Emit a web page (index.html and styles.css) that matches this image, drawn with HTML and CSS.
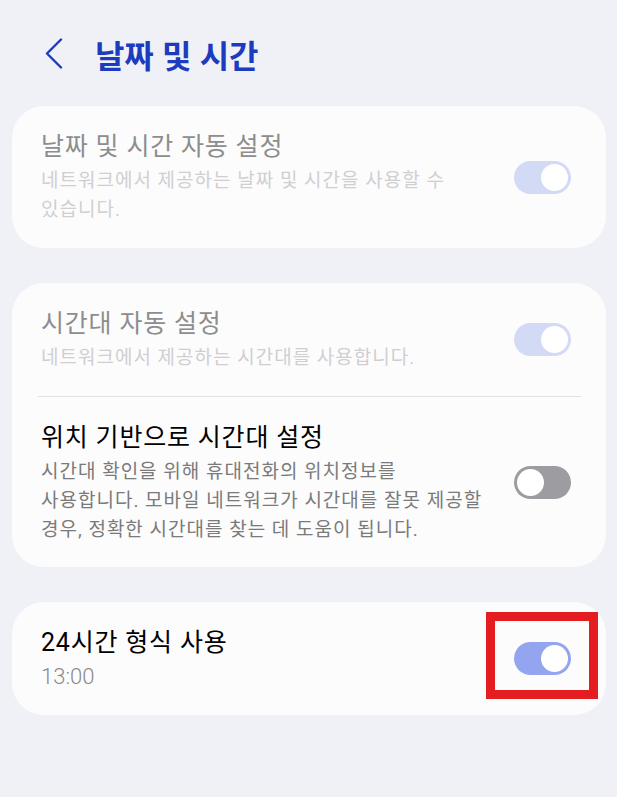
FILE: index.html
```
<!DOCTYPE html>
<html lang="ko">
<head>
<meta charset="utf-8">
<title>날짜 및 시간</title>
<link rel="stylesheet" href="styles.css">
</head>
<body>
<div class="page">
  <header class="header">
    <svg class="back" width="20" height="31" viewBox="0 0 20 31" aria-hidden="true">
      <polyline points="17,1.5 3,15.5 17,29.5" fill="none" stroke="#1d3bbf" stroke-width="2.4" stroke-linejoin="round" stroke-linecap="round"/>
    </svg>
    <h1 class="title">날짜 및 시간</h1>
  </header>

  <section class="card">
    <div class="row">
      <div class="text">
        <div class="label dim">날짜 및 시간 자동 설정</div>
        <div class="desc dim">네트워크에서 제공하는 날짜 및 시간을 사용할 수 있습니다.</div>
      </div>
      <span class="switch on disabled"><span class="thumb"></span></span>
    </div>
  </section>

  <section class="card">
    <div class="row">
      <div class="text">
        <div class="label dim">시간대 자동 설정</div>
        <div class="desc dim">네트워크에서 제공하는 시간대를 사용합니다.</div>
      </div>
      <span class="switch on disabled"><span class="thumb"></span></span>
    </div>
    <div class="divider"></div>
    <div class="row last">
      <div class="text">
        <div class="label">위치 기반으로 시간대 설정</div>
        <div class="desc">시간대 확인을 위해 휴대전화의 위치정보를 사용합니다. 모바일 네트워크가 시간대를 잘못 제공할 경우, 정확한 시간대를 찾는 데 도움이 됩니다.</div>
      </div>
      <span class="switch off"><span class="thumb"></span></span>
    </div>
  </section>

  <section class="card">
    <div class="row">
      <div class="text">
        <div class="label">24시간 형식 사용</div>
        <div class="desc value">13:00</div>
      </div>
      <span class="switch on"><span class="thumb"></span></span>
    </div>
  </section>
</div>
<div class="highlight"></div>
</body>
</html>
```
FILE: styles.css
```
* { box-sizing: border-box; }
html, body {
  margin: 0;
  padding: 0;
  background: #f0f1f6;
}
body {
  width: 617px;
  height: 797px;
  overflow: hidden;
  position: relative;
  font-family: Roboto, "Noto Sans CJK KR", sans-serif;
}
.page {
  padding: 0 11px 0 12px;
  display: flex;
  flex-direction: column;
  gap: 35px;
}
.header {
  height: 71px;
  display: flex;
  align-items: center;
  padding-left: 32px;
  padding-top: 36px;
}
.back {
  display: block;
  flex: none;
  margin-right: 31px;
}
.title {
  margin: 0;
  font-family: "Noto Sans CJK KR", sans-serif;
  font-weight: 700;
  font-size: 32px;
  line-height: 36px;
  color: #1d3bbf;
  letter-spacing: -0.3px;
}
.card {
  background: #fcfcfd;
  border-radius: 32px;
  display: flex;
  flex-direction: column;
}
.row {
  display: flex;
  align-items: center;
  padding: 24px 35px 24px 29px;
}
.row.last {
  padding-bottom: 23px;
}
.text {
  flex: 1;
  min-width: 0;
  word-break: keep-all;
}
.text .desc {
  max-width: 452px;
}
.label {
  font-size: 25px;
  line-height: 34px;
  color: #000;
  letter-spacing: 0.8px;
}
.label.dim { color: #8d8d8d; }
.desc {
  margin-top: 2px;
  font-size: 19px;
  line-height: 29px;
  color: #7a7a7a;
  letter-spacing: 1px;
}
.desc.dim { color: #cfcfd1; }
.desc.value {
  color: #8a8a8a;
  font-size: 22px;
  letter-spacing: 0;
  font-weight: 300;
}
.divider {
  height: 1px;
  background: #e3e3e6;
  margin: 0 25px 0 26px;
}
.switch {
  flex: none;
  width: 57px;
  height: 33px;
  border-radius: 17px;
  padding: 3px;
  display: flex;
  margin-left: 12px;
}
.switch .thumb {
  width: 27px;
  height: 27px;
  border-radius: 50%;
  background: #ffffff;
}
.switch.on { justify-content: flex-end; background: #93a5ee; }
.switch.on.disabled { background: #d3daf6; }
.switch.off { justify-content: flex-start; background: #9c9ca1; }
.highlight {
  position: absolute;
  left: 486px;
  top: 612px;
  width: 112px;
  height: 87px;
  border: 9px solid #e41d20;
}
```
